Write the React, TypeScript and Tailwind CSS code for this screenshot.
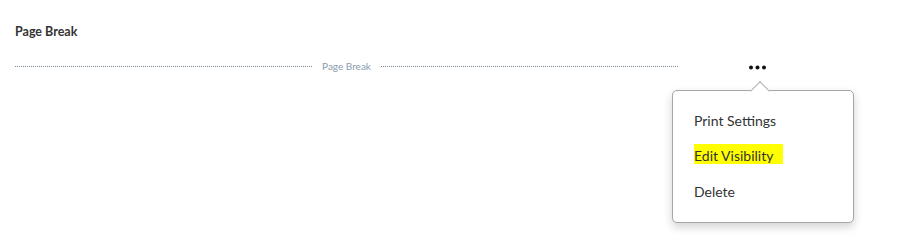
export default function App() {
  return (
    <div className="relative h-[247px] w-[900px] bg-white font-['Lato','Liberation_Sans',sans-serif] text-[#333]">
      {/* Header */}
      <div className="pl-[15px] pt-[24px] text-[12.5px] font-bold leading-[16px] text-[#333]">Page Break</div>

      {/* Page break divider */}
      <div className="mt-[20px] flex items-center">
        <div className="ml-[15px] flex w-[663px] items-center">
          <div className="h-0 flex-1 border-t border-dotted border-[#7d8c99]" />
          <span className="px-[10px] text-[10px] leading-[12px] text-[#8a9cae]">Page Break</span>
          <div className="h-0 flex-1 border-t border-dotted border-[#7d8c99]" />
        </div>
        <button className="ml-[71px] mt-[3px] flex h-[6px] w-[17px] items-center justify-center">
          <svg width="17" height="5" viewBox="0 0 17 5" fill="#111">
            <circle cx="2" cy="2.5" r="2" />
            <circle cx="8.5" cy="2.5" r="2" />
            <circle cx="15" cy="2.5" r="2" />
          </svg>
        </button>
      </div>

      {/* Context menu */}
      <div className="absolute left-[672px] top-[90px] h-[133px] w-[182px] rounded-[5px] border border-[#a6a6a6] bg-white shadow-[0_4px_10px_rgba(0,0,0,0.18)]">
        <div className="absolute -top-[7px] left-[80px] h-[14px] w-[14px] rotate-45 border-l border-t border-[#b0b0b0] bg-white" />
        <ul className="pl-[21px] pt-[21px] text-[14px] leading-[18px] text-[#333]">
          <li className="h-[35px]">Print Settings</li>
          <li className="h-[36px]">
            <span className="bg-[#ffff00] pb-[0px] pr-[10px] pt-[3px]">Edit Visibility</span>
          </li>
          <li>Delete</li>
        </ul>
      </div>
    </div>
  );
}
